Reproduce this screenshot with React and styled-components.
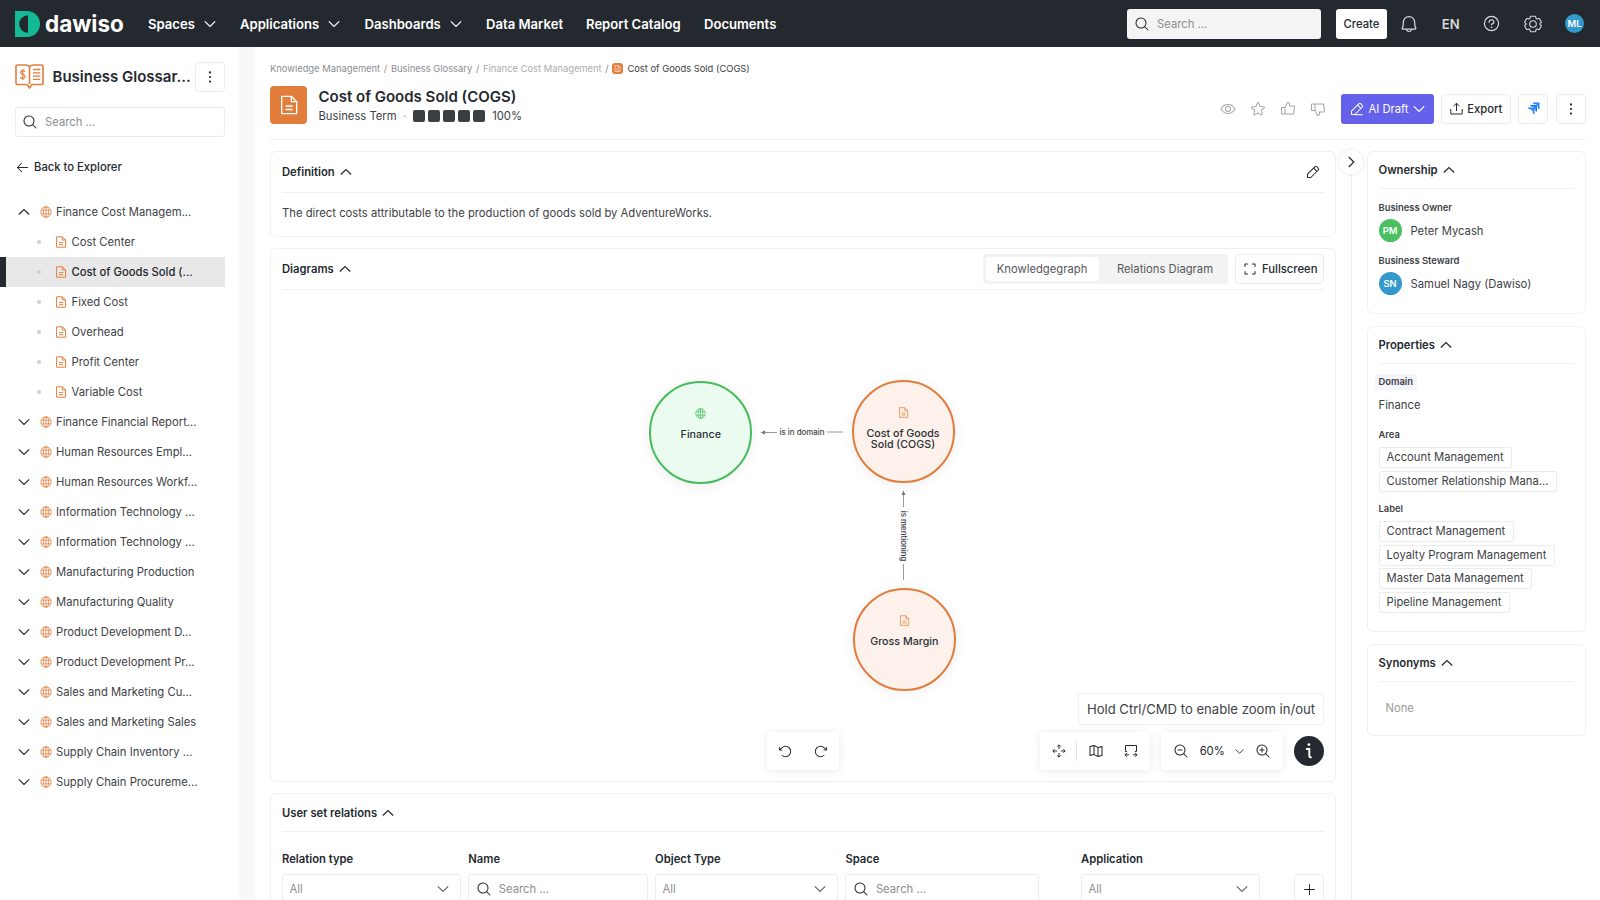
import styled, { createGlobalStyle } from "styled-components";
import {
    PiBell, PiQuestion, PiEye, PiStar, PiThumbsUp, PiThumbsDown, PiMagnifyingGlass,
    PiArrowLeft, PiCornersOut, PiArrowCounterClockwise,
    PiArrowClockwise, PiMapTrifold, PiMagnifyingGlassMinus, PiMagnifyingGlassPlus, PiPlus
} from "react-icons/pi";

const tree = [
    { label: "Finance Cost Managem...", open: true },
    { label: "Cost Center", child: true },
    { label: "Cost of Goods Sold (...", child: true, selected: true },
    { label: "Fixed Cost", child: true },
    { label: "Overhead", child: true },
    { label: "Profit Center", child: true },
    { label: "Variable Cost", child: true },
    { label: "Finance Financial Report..." },
    { label: "Human Resources Empl..." },
    { label: "Human Resources Workf..." },
    { label: "Information Technology ..." },
    { label: "Information Technology ..." },
    { label: "Manufacturing Production" },
    { label: "Manufacturing Quality" },
    { label: "Product Development D..." },
    { label: "Product Development Pr..." },
    { label: "Sales and Marketing Cu..." },
    { label: "Sales and Marketing Sales" },
    { label: "Supply Chain Inventory ..." },
    { label: "Supply Chain Procureme..." },
]

const nav = [
    { label: "Spaces", menu: true, width: 92 },
    { label: "Applications", menu: true, width: 124.5 },
    { label: "Dashboards", menu: true, width: 121.5 },
    { label: "Data Market", width: 100 },
    { label: "Report Catalog", width: 118 },
    { label: "Documents", width: 90 },
]

const areas = ["Account Management", "Customer Relationship Mana..."]
const labels = ["Contract Management", "Loyalty Program Management", "Master Data Management", "Pipeline Management"]

function Chevron({ dir = "down", size = 12, color = "#24292f" }) {
    const paths = {
        down: "M0.8 3.4L6 8.4L11.2 3.4",
        up: "M0.8 8.5L6 3.5L11.2 8.5",
        right: "M3.8 1L8.8 6L3.8 11",
    }
    return (
        <svg width={size} height={size} viewBox="0 0 12 12" fill="none" stroke={color} strokeWidth="1.2">
            <path d={paths[dir]} />
        </svg>
    )
}

function DocIcon({ size = 12, color = "#e27d3c", weight = 1 }) {
    return (
        <svg width={size} height={size} viewBox="0 0 12 12" fill="none" stroke={color} strokeWidth={weight} strokeLinejoin="round">
            <path d="M1.6 0.8H7.4L10.6 4V11.2H1.6Z" />
            <path d="M7.4 0.8V4H10.6M4 6.6H8.2M4 8.7H8.2" />
        </svg>
    )
}

function Globe({ size = 12, color = "#e27d3c" }) {
    return (
        <svg width={size} height={size} viewBox="0 0 12 12" fill="none" stroke={color} strokeWidth="0.75">
            <circle cx="6" cy="6" r="5.2" />
            <ellipse cx="6" cy="6" rx="2.6" ry="5.2" />
            <path d="M6 0.8V11.2M1.2 4.2H10.8M1.2 7.8H10.8" />
        </svg>
    )
}

function Dots() {
    return (
        <svg width="14" height="14" viewBox="0 0 14 14" fill="#24292f">
            <circle cx="7" cy="2.4" r="1.1" />
            <circle cx="7" cy="7" r="1.1" />
            <circle cx="7" cy="11.6" r="1.1" />
        </svg>
    )
}

function Pencil({ size = 14, color = "#24292f", line }) {
    return (
        <svg width={size} height={size} viewBox="0 0 14 14" fill="none" stroke={color} strokeWidth="1.05" strokeLinejoin="round">
            <path d="M1.5 9.2L9 1.7Q9.8 0.9 10.6 1.7L12.3 3.4Q13 4.2 12.3 5L4.8 12.5H1.5Z" />
            <path d="M7.6 3.1L10.9 6.4" />
            {line && <path d="M4.8 12.7H12.8" />}
        </svg>
    )
}

function Gear() {
    return (
        <svg width="18" height="18" viewBox="0 0 18 18" fill="none" stroke="#d6d8da" strokeWidth="1.1" strokeLinejoin="round">
            <path d="M7 1.2H11Q11.7 1.2 11.8 2L12 3.4L13 4L14.4 3.5Q15.1 3.3 15.5 3.9L17.2 6.7Q17.5 7.3 17 7.7L15.9 8.6V9.4L17 10.3Q17.5 10.7 17.2 11.3L15.5 14.1Q15.1 14.7 14.4 14.5L13 14L12 14.6L11.8 16Q11.7 16.8 11 16.8H7Q6.3 16.8 6.2 16L6 14.6L5 14L3.6 14.5Q2.9 14.7 2.5 14.1L0.8 11.3Q0.5 10.7 1 10.3L2.1 9.4V8.6L1 7.7Q0.5 7.3 0.8 6.7L2.5 3.9Q2.9 3.3 3.6 3.5L5 4L6 3.4L6.2 2Q6.3 1.2 7 1.2Z" />
            <circle cx="9" cy="9" r="3.3" />
        </svg>
    )
}

export default function App() {
    return (
        <Page>
            <GlobalStyle />
            <TopBar>
                <Brand>
                    <svg width="25" height="26" viewBox="0 0 25 26">
                        <path d="M0 0H12A13 13 0 0 1 12 26H0Z" fill="#14b996" />
                        <path d="M13 4.2V21.8A8.8 8.8 0 0 1 13 4.2Z" fill="#24292f" />
                    </svg>
                    <BrandName>dawiso</BrandName>
                </Brand>
                <Nav>
                    {nav.map((n) => (
                        <NavItem key={n.label} $width={n.width}>
                            {n.label}
                            {n.menu && <Chevron color="#fff" />}
                        </NavItem>
                    ))}
                </Nav>
                <TopSearch><PiMagnifyingGlass />Search ...</TopSearch>
                <CreateButton>Create</CreateButton>
                <TopIcons>
                    <PiBell size={20} />
                    <Lang>EN</Lang>
                    <PiQuestion size={19} />
                    <Gear />
                    <Avatar $size={19} $color="#3398cc">ML</Avatar>
                </TopIcons>
            </TopBar>
            <Body>
                <Sidebar>
                    <SpaceHead>
                        <svg width="29" height="26" viewBox="0 0 29 26" fill="none" stroke="#e27d3c" strokeWidth="1.6" strokeLinejoin="round">
                            <path d="M14.5 3.2Q13.5 1 11 1H2.2Q1 1 1 2.2V19.3Q1 20.5 2.2 20.5H12L14.5 24L17 20.5H26.8Q28 20.5 28 19.3V2.2Q28 1 26.8 1H18Q15.5 1 14.5 3.2V20" />
                            <path d="M18 5.5H25.3M18 8.8H25.3M18 12.1H25.3M18 15.4H25.3" strokeWidth="1.3" />
                            <path d="M10 7.6Q9.4 6.6 7.8 6.6Q5.6 6.7 5.6 8.4Q5.7 10 7.9 10.4Q10.1 10.9 10.1 12.5Q10 14.2 7.8 14.3Q6 14.3 5.3 13.1M7.8 5V16" strokeWidth="1.2" />
                        </svg>
                        <SpaceName>Business Glossar...</SpaceName>
                        <IconButton><Dots /></IconButton>
                    </SpaceHead>
                    <SideSearch><PiMagnifyingGlass />Search ...</SideSearch>
                    <BackLink><PiArrowLeft />Back to Explorer</BackLink>
                    <Tree>
                        {tree.map((t, i) => t.child ? (
                            <Leaf key={i} $selected={t.selected}>
                                <Bullet />
                                <DocIcon />
                                {t.label}
                            </Leaf>
                        ) : (
                            <Branch key={i}>
                                <Chevron dir={t.open ? "up" : "down"} />
                                <Globe />
                                {t.label}
                            </Branch>
                        ))}
                    </Tree>
                </Sidebar>
                <Splitter />
                <Main>
                    <Crumbs>
                        <span>Knowledge Management</span><i>/</i>
                        <span>Business Glossary</span><i>/</i>
                        <Faded>Finance Cost Management</Faded><i>/</i>
                        <CrumbBadge><DocIcon size={7} color="#fff" /></CrumbBadge>
                        <Current>Cost of Goods Sold (COGS)</Current>
                    </Crumbs>
                    <TitleRow>
                        <ObjectBadge><DocIcon size={20} color="#fff" weight={0.8} /></ObjectBadge>
                        <TitleText>
                            <Title>Cost of Goods Sold (COGS)</Title>
                            <SubTitle>
                                Business Term
                                <Separator>·</Separator>
                                <Squares>{[1, 2, 3, 4, 5].map((s) => <Square key={s} />)}</Squares>
                                100%
                            </SubTitle>
                        </TitleText>
                        <Reactions>
                            <PiEye /><PiStar /><PiThumbsUp /><PiThumbsDown />
                        </Reactions>
                        <DraftButton><Pencil color="#fff" line />AI Draft<Chevron color="#fff" /></DraftButton>
                        <OutlineButton $width={70}>
                            <svg width="13" height="13" viewBox="0 0 13 13" fill="none" stroke="#24292f" strokeWidth="1">
                                <path d="M0.8 7V12H12.2V7M6.5 9V1.5M3.5 4.2L6.5 1.2L9.5 4.2" />
                            </svg>
                            Export
                        </OutlineButton>
                        <IconButton>
                            <svg width="13" height="13" viewBox="0 0 13 13">
                                <path d="M5.4 0.5H12.5V7.6L10.7 6V3.6L9.4 2.3H7Z" fill="#2684ff" />
                                <path d="M2.9 3H10V10.1L8.2 8.5V6.1L6.9 4.8H4.5Z" fill="#1873ee" />
                                <path d="M0.4 5.5H7.5V12.6L5.7 11V8.6L4.4 7.3H2Z" fill="#2684ff" />
                                <path d="M7 6L11.3 1.7M4.5 8.5L8.8 4.2" stroke="#2684ff" strokeWidth="1.4" />
                            </svg>
                        </IconButton>
                        <IconButton><Dots /></IconButton>
                    </TitleRow>
                    <Columns>
                        <Content>
                            <Card $height={86}>
                                <CardHead $height={41}>
                                    Definition<Chevron dir="up" />
                                    <HeadRight $pad={4}><Pencil /></HeadRight>
                                </CardHead>
                                <Definition>The direct costs attributable to the production of goods sold by AdventureWorks.</Definition>
                            </Card>
                            <Card $height={534}>
                                <CardHead $height={41}>
                                    Diagrams<Chevron dir="up" />
                                    <HeadRight>
                                        <Tabs>
                                            <Tab $width={113} $active>Knowledgegraph</Tab>
                                            <Tab $width={119}>Relations Diagram</Tab>
                                        </Tabs>
                                        <OutlineButton $width={89}><PiCornersOut size={16} />Fullscreen</OutlineButton>
                                    </HeadRight>
                                </CardHead>
                                <Canvas>
                                    <Edges viewBox="0 0 1043 489" width="1043" height="489">
                                        <g stroke="#9a9a9a" strokeWidth="1" fill="#777">
                                            <path d="M481 142.5H495M545 142H561M621.5 204V217M621.5 274V290" />
                                            <path d="M478.5 142.5L483 140.5V144.5ZM621.5 200.5L619.5 205H623.5Z" stroke="none" />
                                        </g>
                                        <text x="520" y="145" textAnchor="middle">is in domain</text>
                                        <text transform="translate(619.3 246) rotate(90)" textAnchor="middle">is mentioning</text>
                                    </Edges>
                                    <Node $x={367.3} $y={91.3} $tone="green"><Globe size={11} color="#46bd5d" />Finance</Node>
                                    <Node $x={569.5} $y={90}><DocIcon size={11} weight={0.8} />Cost of Goods<br />Sold (COGS)</Node>
                                    <Node $x={570.8} $y={298}><DocIcon size={11} weight={0.8} />Gross Margin</Node>
                                    <Hint>Hold Ctrl/CMD to enable zoom in/out</Hint>
                                    <History><PiArrowCounterClockwise size={15} /><PiArrowClockwise size={15} /></History>
                                    <Controls>
                                        <Tools $width={110}>
                                            <svg width="14" height="14" viewBox="0 0 14 14" fill="none" stroke="#24292f">
                                                <path d="M7 1V5M7 9V13M1 7H5M9 7H13M5.2 2.6L7 0.8L8.8 2.6M5.2 11.4L7 13.2L8.8 11.4M2.6 5.2L0.8 7L2.6 8.8M11.4 5.2L13.2 7L11.4 8.8" />
                                            </svg>
                                            <Rule />
                                            <PiMapTrifold size={16} />
                                            <Spacer />
                                            <svg width="14" height="14" viewBox="0 0 14 14" fill="none" stroke="#24292f">
                                                <path d="M3 7.5H1.5V1.5H12.5V7.5H11M1 10.8H5M9 10.8H13M3 8.8L1 10.8L3 12.8M11 8.8L13 10.8L11 12.8" />
                                            </svg>
                                        </Tools>
                                        <Tools $width={122}>
                                            <PiMagnifyingGlassMinus size={16} />
                                            60%
                                            <Chevron size={9} />
                                            <PiMagnifyingGlassPlus size={16} />
                                        </Tools>
                                        <Info>
                                            <svg width="10" height="18" viewBox="0 0 10 18" fill="none" stroke="#fff" strokeWidth="1.9">
                                                <path d="M2 7H5.3V14Q5.3 15.6 7.6 15.2" />
                                                <circle cx="4.9" cy="2.6" r="1.4" fill="#fff" stroke="none" />
                                            </svg>
                                        </Info>
                                    </Controls>
                                </Canvas>
                            </Card>
                            <Card $height={160}>
                                <CardHead $height={38}>User set relations<Chevron dir="up" /></CardHead>
                                <Filters>
                                    <Filter><b>Relation type</b><Field>All<Chevron color="#666" /></Field></Filter>
                                    <Filter><b>Name</b><Field $search><PiMagnifyingGlass />Search ...</Field></Filter>
                                    <Filter><b>Object Type</b><Field>All<Chevron color="#666" /></Field></Filter>
                                    <Filter><b>Space</b><Field $search><PiMagnifyingGlass />Search ...</Field></Filter>
                                    <Filter $col={6}><b>Application</b><Field>All<Chevron color="#666" /></Field></Filter>
                                    <AddButton><PiPlus /></AddButton>
                                </Filters>
                            </Card>
                        </Content>
                        <Divider><Toggle><Chevron dir="right" /></Toggle></Divider>
                        <Aside>
                            <Card $height={163}>
                                <CardHead $height={37}>Ownership<Chevron dir="up" /></CardHead>
                                <Caption $top={11}>Business Owner</Caption>
                                <Person><Avatar $size={23} $color="#4bc062">PM</Avatar>Peter Mycash</Person>
                                <Caption $top={9}>Business Steward</Caption>
                                <Person><Avatar $size={23} $color="#3398cc">SN</Avatar>Samuel Nagy (Dawiso)</Person>
                            </Card>
                            <Card $height={306}>
                                <CardHead $height={37}>Properties<Chevron dir="up" /></CardHead>
                                <Caption $top={10}><mark>Domain</mark></Caption>
                                <Value>Finance</Value>
                                <Caption $top={7}>Area</Caption>
                                <Chips>{areas.map((a) => <Chip key={a}>{a}</Chip>)}</Chips>
                                <Caption $top={9}>Label</Caption>
                                <Chips>{labels.map((l) => <Chip key={l}>{l}</Chip>)}</Chips>
                            </Card>
                            <Card $height={92}>
                                <CardHead $height={37}>Synonyms<Chevron dir="up" /></CardHead>
                                <None>None</None>
                            </Card>
                        </Aside>
                    </Columns>
                </Main>
            </Body>
        </Page>
    )
}

const GlobalStyle = createGlobalStyle`
    * {
        box-sizing: border-box;
    }
    body {
        margin: 0;
        overflow: hidden;
        font-family: Inter, sans-serif;
        font-size: 11.25px;
        color: #3d4146;
        background: #fff;
    }
    svg {
        flex: none;
    }
`
const Page = styled.div`
    height: 900px;
    display: flex;
    flex-direction: column;
    overflow: hidden;
    white-space: nowrap;
`
const TopBar = styled.header`
    height: 47px;
    flex: none;
    display: flex;
    align-items: center;
    background: #24292f;
    padding: 0 16px 0 15px;
`
const Brand = styled.div`
    width: 133px;
    display: flex;
    align-items: center;
    gap: 5px;
`
const BrandName = styled.span`
    color: #fff;
    font-size: 22.5px;
    font-weight: 700;
    line-height: 26px;
`
const Nav = styled.nav`
    display: flex;
    flex: 1;
`
const NavItem = styled.div`
    width: ${({ $width }) => $width}px;
    display: flex;
    align-items: center;
    gap: 9px;
    color: #fff;
    font-size: 13.1px;
    font-weight: 600;
`
const TopSearch = styled.div`
    width: 194px;
    height: 30px;
    display: flex;
    align-items: center;
    gap: 7px;
    padding-left: 7px;
    border-radius: 3px;
    background: #f4f4f4;
    color: #8e8e8e;
    svg {
        width: 16px;
        height: 16px;
        color: #24292f;
    }
`
const CreateButton = styled.div`
    width: 51px;
    height: 30px;
    margin-left: 15px;
    line-height: 30px;
    text-align: center;
    border-radius: 3px;
    background: #fff;
    color: #24292f;
    font-weight: 500;
`
const TopIcons = styled.div`
    width: 185px;
    margin-left: 12px;
    display: flex;
    align-items: center;
    justify-content: space-between;
    color: #d6d8da;
`
const Lang = styled.span`
    font-size: 13.1px;
    font-weight: 600;
`
const Avatar = styled.span`
    width: ${({ $size }) => $size}px;
    height: ${({ $size }) => $size}px;
    border-radius: 50%;
    display: flex;
    align-items: center;
    justify-content: center;
    background: ${({ $color }) => $color};
    color: #fff;
    font-size: 9.4px;
    font-weight: 600;
`
const Body = styled.div`
    flex: 1;
    min-height: 0;
    display: flex;
`
const Sidebar = styled.aside`
    width: 239px;
    padding-top: 15px;
`
const SpaceHead = styled.div`
    height: 30px;
    display: flex;
    align-items: center;
    padding: 0 14px 0 15px;
`
const SpaceName = styled.div`
    flex: 1;
    min-width: 0;
    padding: 0 0 1px 8.5px;
    font-size: 15px;
    font-weight: 600;
    color: #24292f;
`
const IconButton = styled.div`
    width: 30px;
    height: 30px;
    flex: none;
    display: flex;
    align-items: center;
    justify-content: center;
    border: 1px solid #ececec;
    border-radius: 4px;
`
const SideSearch = styled(TopSearch)`
    width: 210px;
    margin: 15px 0 0 15px;
    padding-left: 6px;
    background: #fff;
    border: 1px solid #ececec;
`
const BackLink = styled.div`
    height: 20px;
    margin: 20px 0 0 15px;
    display: flex;
    align-items: center;
    gap: 4px;
    color: #24292f;
    font-weight: 500;
    svg {
        width: 15px;
        height: 15px;
    }
`
const Tree = styled.div`
    margin-top: 20px;
`
const Branch = styled.div`
    height: 30px;
    display: flex;
    align-items: center;
    padding-left: 18px;
    svg + svg {
        margin: 0 4px 0 10px;
    }
`
const Leaf = styled.div`
    height: 30px;
    display: flex;
    align-items: center;
    gap: 4.5px;
    margin-right: 14px;
    padding-left: ${({ $selected }) => $selected ? 31 : 37}px;
    border-left: ${({ $selected }) => $selected ? "6px solid #24292f" : "none"};
    background: ${({ $selected }) => $selected ? "#e8e8e8" : "transparent"};
    font-weight: ${({ $selected }) => $selected ? 500 : 400};
    color: ${({ $selected }) => $selected ? "#24292f" : "inherit"};
`
const Bullet = styled.span`
    width: 4px;
    height: 4px;
    margin-right: 9.5px;
    border-radius: 50%;
    background: #cfcfcf;
`
const Splitter = styled.div`
    width: 16px;
    background: #f8f8f8;
`
const Main = styled.main`
    flex: 1;
    min-width: 0;
    padding: 15px 14.5px 0 15px;
`
const Crumbs = styled.div`
    height: 13px;
    margin-bottom: 1px;
    display: flex;
    align-items: center;
    font-size: 9.375px;
    color: #8b8e91;
    i {
        width: 10.8px;
        text-align: center;
        font-style: normal;
    }
`
const Faded = styled.span`
    color: #acacac;
`
const CrumbBadge = styled.span`
    width: 11px;
    height: 11px;
    margin: 0 4px 0 0;
    display: flex;
    align-items: center;
    justify-content: center;
    border-radius: 3px;
    background: #e27d3c;
`
const Current = styled.span`
    color: #3d4146;
`
const TitleRow = styled.div`
    height: 64px;
    display: flex;
    align-items: center;
    padding-top: 2px;
    border-bottom: 1px solid #f0f0f0;
`
const ObjectBadge = styled.div`
    width: 37px;
    height: 38px;
    margin-bottom: 7px;
    display: flex;
    align-items: center;
    justify-content: center;
    border-radius: 4px;
    background: #e27d3c;
`
const TitleText = styled.div`
    flex: 1;
    padding-left: 11.5px;
    margin-bottom: 6px;
`
const Title = styled.h1`
    margin: 0;
    font-size: 15px;
    line-height: 20px;
    font-weight: 600;
    color: #24292f;
`
const SubTitle = styled.div`
    height: 18px;
    display: flex;
    align-items: center;
`
const Separator = styled.span`
    width: 16.5px;
    text-align: center;
    color: #999;
`
const Squares = styled.span`
    display: flex;
    gap: 3px;
    margin-right: 7px;
`
const Square = styled.span`
    width: 12px;
    height: 12px;
    border-radius: 2px;
    background: #3b3e43;
`
const Reactions = styled.div`
    display: flex;
    gap: 14px;
    margin-right: 15px;
    color: #a3a3a3;
    svg {
        width: 16px;
        height: 16px;
    }
`
const DraftButton = styled.div`
    width: 93px;
    height: 30px;
    margin-right: 7px;
    display: flex;
    align-items: center;
    justify-content: center;
    gap: 4.5px;
    border-radius: 3px;
    background: #6661ea;
    color: #fff;
`
const OutlineButton = styled.div`
    width: ${({ $width }) => $width}px;
    height: 30px;
    display: flex;
    align-items: center;
    justify-content: center;
    gap: 4.5px;
    border: 1px solid #ececec;
    border-radius: 4px;
    background: #fff;
    color: #24292f;
    font-weight: 500;
    & + ${IconButton} {
        margin: 0 7.5px 0 7px;
    }
`
const Columns = styled.div`
    display: flex;
    padding-top: 11px;
    height: 761px;
`
const Content = styled.div`
    width: 1066px;
    display: flex;
    flex-direction: column;
    gap: 11px;
`
const Card = styled.section`
    height: ${({ $height }) => $height}px;
    flex: none;
    padding: 0 11px;
    border: 1px solid #f0f0f0;
    border-radius: 6px;
`
const CardHead = styled.div`
    height: ${({ $height }) => $height}px;
    display: flex;
    align-items: center;
    gap: 5px;
    border-bottom: 1px solid #f0f0f0;
    color: #24292f;
    font-weight: 600;
`
const HeadRight = styled.div`
    flex: 1;
    display: flex;
    justify-content: flex-end;
    gap: 7.5px;
    padding-right: ${({ $pad }) => $pad || 0}px;
    font-weight: 400;
`
const Definition = styled.p`
    margin: 0;
    line-height: 41px;
`
const Tabs = styled.div`
    height: 30px;
    display: flex;
    gap: 7px;
    padding: 3px;
    border-radius: 4px;
    background: #f3f3f3;
    color: #55585c;
`
const Tab = styled.div`
    width: ${({ $width }) => $width}px;
    line-height: 24px;
    text-align: center;
    border-radius: 3px;
    background: ${({ $active }) => $active ? "#fff" : "transparent"};
`
const Canvas = styled.div`
    position: relative;
    height: 489px;
`
const Edges = styled.svg`
    display: block;
    text {
        font-size: 7.9px;
        font-weight: 500;
        fill: #3d4146;
    }
`
const Node = styled.div`
    position: absolute;
    left: ${({ $x }) => $x}px;
    top: ${({ $y }) => $y}px;
    width: 103px;
    height: 103px;
    padding-top: 25px;
    border-radius: 50%;
    border: 2px solid ${({ $tone }) => $tone === "green" ? "#46bd5d" : "#e27d3c"};
    background: ${({ $tone }) => $tone === "green" ? "#ebfbef" : "#fdf2eb"};
    box-shadow: 0 2px 14px rgba(0, 0, 0, 0.07);
    text-align: center;
    font-size: 10.7px;
    line-height: 11px;
    font-weight: 500;
    color: #2b3036;
    svg {
        display: block;
        margin: 0 auto 10px;
    }
`
const Hint = styled.div`
    position: absolute;
    right: 0;
    bottom: 54px;
    width: 246px;
    height: 32px;
    line-height: 30px;
    text-align: center;
    border: 1px solid #f0f0f0;
    border-radius: 3px;
    background: #fff;
    font-size: 13.1px;
`
const Tools = styled.div`
    width: ${({ $width }) => $width}px;
    height: 38px;
    display: flex;
    align-items: center;
    justify-content: space-between;
    padding: 0 12px;
    border-radius: 4px;
    background: #fff;
    box-shadow: 0 1px 8px rgba(0, 0, 0, 0.09);
    color: #24292f;
`
const History = styled(Tools)`
    position: absolute;
    left: 485px;
    bottom: 9px;
    width: 72px;
    padding: 0 11px;
`
const Controls = styled.div`
    position: absolute;
    right: 0;
    bottom: 9px;
    display: flex;
    align-items: center;
    gap: 11px;
`
const Rule = styled.span`
    width: 1px;
    height: 20px;
    background: #e4e4e4;
`
const Spacer = styled.span`
    width: 0;
`
const Info = styled.div`
    width: 30px;
    height: 30px;
    display: flex;
    align-items: center;
    justify-content: center;
    border-radius: 50%;
    background: #24292f;
`
const Filters = styled.div`
    display: grid;
    grid-template-columns: 179px 179.5px 183px 194px 27px 179px 57px;
    column-gap: 7.3px;
    padding-top: 18px;
`
const Filter = styled.div`
    grid-column: ${({ $col }) => $col || "auto"};
    b {
        display: block;
        line-height: 18px;
        margin-bottom: 6px;
        font-weight: 600;
        color: #24292f;
    }
`
const Field = styled.div`
    height: 30px;
    display: flex;
    align-items: center;
    justify-content: ${({ $search }) => $search ? "flex-start" : "space-between"};
    gap: 7px;
    padding: 0 11px 0 6.5px;
    border: 1px solid #ececec;
    border-radius: 3px;
    color: #8e8e8e;
    > svg[stroke="currentColor"] {
        width: 16px;
        height: 16px;
        color: #24292f;
    }
`
const AddButton = styled(IconButton)`
    margin: 24px 0 0 27px;
    svg {
        width: 15px;
        height: 15px;
        color: #24292f;
    }
`
const Divider = styled.div`
    width: 30.5px;
    display: flex;
    justify-content: center;
    background: linear-gradient(#ececec, #ececec) center / 1px 100% no-repeat;
`
const Toggle = styled.div`
    width: 24px;
    height: 24px;
    margin-top: -1px;
    display: flex;
    align-items: center;
    justify-content: center;
    border-radius: 50%;
    background: #fff;
    box-shadow: 0 0 5px rgba(0, 0, 0, 0.1);
`
const Aside = styled.div`
    width: 219px;
    display: flex;
    flex-direction: column;
    gap: 12px;
`
const Caption = styled.div`
    height: 16px;
    margin-top: ${({ $top }) => $top}px;
    line-height: 16px;
    font-size: 9.4px;
    font-weight: 600;
    mark {
        display: inline-block;
        margin-left: -4px;
        padding: 0 4px;
        background: #f4f4fb;
        color: inherit;
        border-radius: 2px;
    }
`
const Person = styled.div`
    height: 27px;
    margin-top: 1px;
    display: flex;
    align-items: center;
    gap: 9px;
`
const Value = styled.div`
    line-height: 30px;
`
const Chips = styled.div`
    display: flex;
    flex-direction: column;
    align-items: flex-start;
    gap: 2.8px;
    padding-top: 4px;
`
const Chip = styled.span`
    height: 21px;
    line-height: 19px;
    padding: 0 7.5px 0 7px;
    border: 1px solid #ececec;
    border-radius: 2px;
`
const None = styled.div`
    padding-left: 7px;
    line-height: 52px;
    color: #9c9c9c;
`
